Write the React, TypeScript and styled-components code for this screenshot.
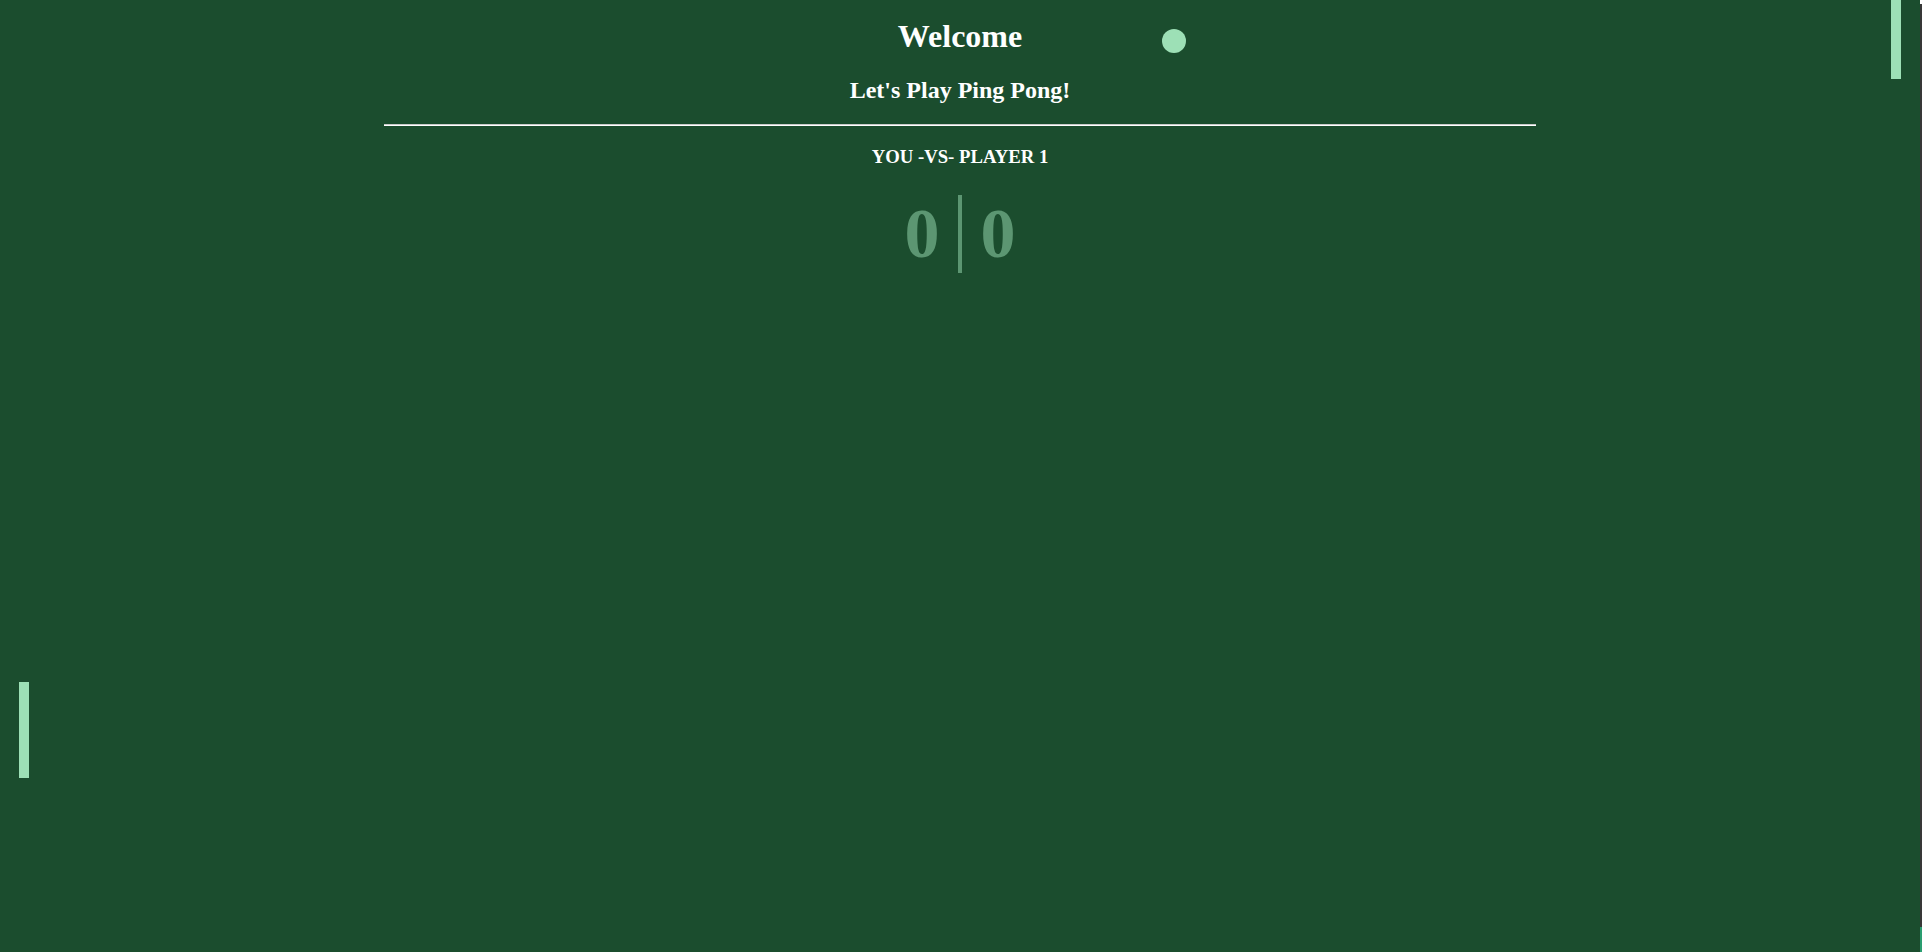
import React from "react";
import styled, { createGlobalStyle } from "styled-components";

const Global = createGlobalStyle`
  html, body { margin: 0; padding: 0; background: #1b4d2e; overflow: hidden; }
  body { font-family: "Liberation Serif", "Times New Roman", serif; }
  #root { width: 1922px; height: 952px; }
`;

const Page = styled.div`
  display: grid;
  grid-template-columns: 1920px 2px;
  width: 1922px;
  height: 952px;
`;

const Court = styled.main`
  position: relative;
  background: #1b4d2e;
  color: #ffffff;
  overflow: hidden;
  display: flex;
  flex-direction: column;
  align-items: center;
  padding-top: 18px;
`;

const Title = styled.h1`
  margin: 0 0 22px;
  font-size: 32px;
  font-weight: 700;
  line-height: normal;
  text-align: center;
`;

const Subtitle = styled.h2`
  margin: 0 0 20px;
  font-size: 24px;
  font-weight: 700;
  line-height: normal;
  text-align: center;
`;

const Rule = styled.hr`
  width: 60%;
  margin: 0;
  height: 0;
  border: 0;
  border-top: 1px solid #c9c9c9;
  border-bottom: 1px solid #ffffff;
`;

const Versus = styled.h3`
  margin: 20px 0 0;
  font-size: 18.72px;
  font-weight: 700;
  line-height: normal;
  text-align: center;
`;

const Score = styled.div`
  margin-top: 27px;
  display: flex;
  align-items: stretch;
  font-size: 70px;
  font-weight: 700;
  line-height: 78px;
  color: rgba(157, 224, 182, 0.5);
`;

const Points = styled.span`
  display: block;
  padding: 0 18.5px;
`;

const Divider = styled.span`
  width: 4px;
  background: rgba(157, 224, 182, 0.5);
`;

const Paddle = styled.div<{ $side: "left" | "right"; $top: number }>`
  position: absolute;
  ${(p) => (p.$side === "left" ? "left: 19px;" : "right: 19px;")}
  top: ${(p) => p.$top}px;
  width: 10px;
  height: 96px;
  background: #9de0b6;
`;

const Ball = styled.div`
  position: absolute;
  left: 1162px;
  top: 29px;
  width: 24px;
  height: 24px;
  border-radius: 50%;
  background: #9de0b6;
`;

const Edge = styled.div`
  display: flex;
  flex-direction: column;
  background: #383838;
`;

const EdgeCap = styled.div`
  height: 4px;
  background: #ffffff;
`;

const EdgeFill = styled.div`
  flex: 1;
`;

const EdgeFoot = styled.div`
  height: 25px;
  background: #2a9d70;
`;

export default function App() {
  return (
    <>
      <Global />
      <Page>
        <Court>
          <Title>Welcome</Title>
          <Subtitle>Let's Play Ping Pong!</Subtitle>
          <Rule />
          <Versus>YOU -VS- PLAYER 1</Versus>
          <Score>
            <Points>0</Points>
            <Divider />
            <Points>0</Points>
          </Score>
          <Paddle $side="left" $top={682} />
          <Paddle $side="right" $top={-17} />
          <Ball />
        </Court>
        <Edge>
          <EdgeCap />
          <EdgeFill />
          <EdgeFoot />
        </Edge>
      </Page>
    </>
  );
}
